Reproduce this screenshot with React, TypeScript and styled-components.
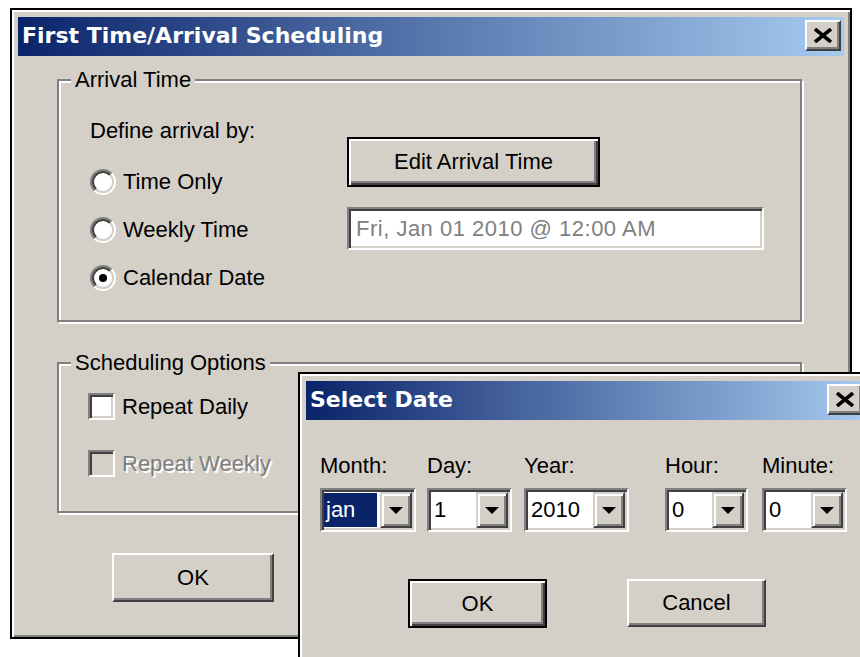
import React from "react";
import styled, { createGlobalStyle, css } from "styled-components";

const FACE = "#d4d0c8";
const SHADOW = "#808080";
const DARK = "#404040";
const LIGHT = "#ffffff";
const SELECT = "#0a246a";

const GlobalStyle = createGlobalStyle`
  html, body { margin: 0; padding: 0; background: #ffffff; }
  body { font-family: "Liberation Sans", Arial, sans-serif; }
`;

const raised = css`
  border: 2px solid;
  border-color: ${LIGHT} ${DARK} ${DARK} ${LIGHT};
  box-shadow: inset -2px -2px ${SHADOW};
`;

const defaultRaised = css`
  border: 2px solid #000;
  box-shadow: inset 2px 2px ${LIGHT}, inset -2px -2px ${DARK},
    inset -4px -4px ${SHADOW};
`;

const sunken = css`
  border: 2px solid;
  border-color: ${SHADOW} ${LIGHT} ${LIGHT} ${SHADOW};
  box-shadow: inset 2px 2px ${DARK}, inset -2px -2px ${FACE};
`;

const Desktop = styled.div`
  position: relative;
  width: 860px;
  height: 657px;
  overflow: hidden;
  background: #ffffff;
  font-family: "Liberation Sans", Arial, sans-serif;
  font-size: 22px;
  color: #000;
`;

const Window = styled.section<{ $x: number; $y: number; $w: number; $h: number }>`
  position: absolute;
  left: ${(p) => p.$x}px;
  top: ${(p) => p.$y}px;
  width: ${(p) => p.$w}px;
  height: ${(p) => p.$h}px;
  box-sizing: border-box;
  display: flex;
  flex-direction: column;
  padding: 7px 6px 6px;
  background: ${FACE};
  border: 2px solid #000;
  box-shadow: inset 2px 2px ${LIGHT}, inset -2px -2px ${SHADOW};
`;

const TitleBar = styled.header`
  flex: none;
  height: 39px;
  display: flex;
  align-items: center;
  justify-content: space-between;
  padding: 0 3px 0 4px;
  background: linear-gradient(to right, #0a246a, #a6caf0);
  overflow: hidden;
`;

const TitleText = styled.h1`
  margin: 0;
  padding-bottom: 2px;
  font: bold 22px/37px "DejaVu Sans", Verdana, sans-serif;
  color: #ffffff;
  white-space: nowrap;
`;

const CloseButton = styled.button`
  flex: none;
  width: 36px;
  height: 31px;
  margin-bottom: 2px;
  padding: 0;
  box-sizing: border-box;
  display: flex;
  align-items: center;
  justify-content: center;
  background: ${FACE};
  ${raised}
`;

const MainBody = styled.div`
  display: flex;
  flex-direction: column;
  align-items: flex-start;
  padding: 11px 0 0 39px;
`;

const GroupBox = styled.fieldset<{ $gapTop?: number }>`
  margin: ${(p) => p.$gapTop ?? 0}px 0 0;
  padding: 0;
  min-inline-size: 0;
  width: 745px;
  box-sizing: border-box;
  border: 2px solid ${SHADOW};
  box-shadow: inset 2px 2px ${LIGHT}, 2px 2px ${LIGHT};
`;

const GroupLegend = styled.legend`
  margin-left: 12px;
  padding: 0 4px;
  background: ${FACE};
  line-height: 26px;
`;

const ArrivalGrid = styled.div`
  display: grid;
  grid-template-columns: 257px 417px;
  padding: 25px 0 29px 31px;
`;

const ChoiceColumn = styled.div`
  display: flex;
  flex-direction: column;
`;

const Caption = styled.div`
  line-height: 26px;
  margin-bottom: 25px;
`;

const RadioList = styled.div`
  display: flex;
  flex-direction: column;
  gap: 22px;
`;

const OptionRow = styled.label<{ $disabled?: boolean }>`
  display: flex;
  align-items: center;
  gap: 7px;
  line-height: 26px;
  white-space: nowrap;
  color: ${(p) => (p.$disabled ? SHADOW : "#000")};
  text-shadow: ${(p) => (p.$disabled ? `2px 2px 0 ${LIGHT}` : "none")};
`;

const RadioOuter = styled.span`
  flex: none;
  width: 26px;
  height: 26px;
  box-sizing: border-box;
  border-radius: 50%;
  border: 2px solid;
  border-color: ${SHADOW} ${LIGHT} ${LIGHT} ${SHADOW};
  display: flex;
  align-items: center;
  justify-content: center;
`;

const RadioInner = styled.span<{ $checked?: boolean }>`
  width: 22px;
  height: 22px;
  box-sizing: border-box;
  border-radius: 50%;
  border: 2px solid;
  border-color: ${DARK} ${FACE} ${FACE} ${DARK};
  background: ${LIGHT};
  display: flex;
  align-items: center;
  justify-content: center;

  &::after {
    content: "";
    display: ${(p) => (p.$checked ? "block" : "none")};
    width: 8px;
    height: 8px;
    border-radius: 50%;
    background: #000;
  }
`;

const ActionColumn = styled.div`
  display: flex;
  flex-direction: column;
  align-items: flex-start;
  gap: 20px;
  padding-top: 19px;
`;

const PushButton = styled.button<{ $w: number; $h: number; $default?: boolean }>`
  width: ${(p) => p.$w}px;
  height: ${(p) => p.$h}px;
  box-sizing: border-box;
  padding: 0;
  background: ${FACE};
  font-family: "Liberation Sans", Arial, sans-serif;
  font-size: 22px;
  color: #000;
  ${(p) => (p.$default ? defaultRaised : raised)}
`;

const ReadOnlyField = styled.div`
  width: 417px;
  height: 43px;
  box-sizing: border-box;
  padding: 0 7px;
  background: ${LIGHT};
  color: ${SHADOW};
  line-height: 39px;
  letter-spacing: 0.5px;
  white-space: nowrap;
  ${sunken}
`;

const OptionsList = styled.div`
  display: flex;
  flex-direction: column;
  gap: 30px;
  padding: 17px 0 34px 29px;
`;

const CheckBox = styled.span<{ $disabled?: boolean }>`
  flex: none;
  width: 27px;
  height: 27px;
  box-sizing: border-box;
  background: ${(p) => (p.$disabled ? FACE : LIGHT)};
  ${sunken}
`;

const MainFooter = styled.div`
  display: flex;
  gap: 60px;
  margin: 40px 0 0 55px;
`;

const PickerBody = styled.div`
  display: flex;
  flex-direction: column;
  align-items: flex-start;
  padding: 33px 0 0 14px;
`;

const FieldRow = styled.div`
  display: flex;
  align-items: flex-start;
`;

const FieldColumn = styled.div<{ $w: number; $offset: number }>`
  width: ${(p) => p.$w}px;
  margin-left: ${(p) => p.$offset}px;
  display: flex;
  flex-direction: column;
  gap: 9px;
`;

const FieldLabel = styled.span`
  line-height: 26px;
  white-space: nowrap;
`;

const Combo = styled.div`
  height: 44px;
  box-sizing: border-box;
  display: flex;
  padding: 2px;
  background: ${LIGHT};
  ${sunken}
`;

const ComboValue = styled.span<{ $selected?: boolean }>`
  flex: 1;
  min-width: 0;
  margin: ${(p) => (p.$selected ? "1px 3px 1px 0" : "0")};
  padding-left: ${(p) => (p.$selected ? "2px" : "3px")};
  background: ${(p) => (p.$selected ? SELECT : "transparent")};
  color: ${(p) => (p.$selected ? LIGHT : "#000")};
  line-height: ${(p) => (p.$selected ? "34px" : "36px")};
  white-space: nowrap;
  overflow: hidden;
`;

const DropButton = styled.span`
  flex: none;
  width: 32px;
  box-sizing: border-box;
  display: flex;
  align-items: center;
  justify-content: center;
  background: ${FACE};
  border: 2px solid;
  border-color: ${FACE} ${DARK} ${DARK} ${FACE};
  box-shadow: inset 2px 2px ${LIGHT}, inset -2px -2px ${SHADOW};

  &::after {
    content: "";
    border-left: 7px solid transparent;
    border-right: 7px solid transparent;
    border-top: 7px solid #000;
  }
`;

const PickerFooter = styled.div`
  display: flex;
  gap: 80px;
  margin: 47px 0 0 88px;
`;

function CloseGlyph() {
  return (
    <svg width="20" height="15" viewBox="0 0 20 15" aria-hidden="true">
      <path d="M2 1 L18 14 M18 1 L2 14" stroke="#000" strokeWidth="3.6" fill="none" />
    </svg>
  );
}

function Radio({ label, checked }: { label: string; checked?: boolean }) {
  return (
    <OptionRow>
      <RadioOuter>
        <RadioInner $checked={checked} />
      </RadioOuter>
      {label}
    </OptionRow>
  );
}

function Check({ label, disabled }: { label: string; disabled?: boolean }) {
  return (
    <OptionRow $disabled={disabled}>
      <CheckBox $disabled={disabled} />
      {label}
    </OptionRow>
  );
}

type FieldSpec = { label: string; value: string; width: number; offset: number; selected?: boolean };

const dateFields: FieldSpec[] = [
  { label: "Month:", value: "jan", width: 96, offset: 0, selected: true },
  { label: "Day:", value: "1", width: 85, offset: 11 },
  { label: "Year:", value: "2010", width: 105, offset: 12 },
  { label: "Hour:", value: "0", width: 83, offset: 36 },
  { label: "Minute:", value: "0", width: 85, offset: 14 },
];

export default function App() {
  return (
    <Desktop>
      <GlobalStyle />

      <Window $x={10} $y={8} $w={842} $h={631}>
        <TitleBar>
          <TitleText>First Time/Arrival Scheduling</TitleText>
          <CloseButton aria-label="Close">
            <CloseGlyph />
          </CloseButton>
        </TitleBar>
        <MainBody>
          <GroupBox>
            <GroupLegend>Arrival Time</GroupLegend>
            <ArrivalGrid>
              <ChoiceColumn>
                <Caption>Define arrival by:</Caption>
                <RadioList>
                  <Radio label="Time Only" />
                  <Radio label="Weekly Time" />
                  <Radio label="Calendar Date" checked />
                </RadioList>
              </ChoiceColumn>
              <ActionColumn>
                <PushButton $w={253} $h={50} $default>
                  Edit Arrival Time
                </PushButton>
                <ReadOnlyField>Fri, Jan 01 2010 @ 12:00 AM</ReadOnlyField>
              </ActionColumn>
            </ArrivalGrid>
          </GroupBox>

          <GroupBox $gapTop={28}>
            <GroupLegend>Scheduling Options</GroupLegend>
            <OptionsList>
              <Check label="Repeat Daily" />
              <Check label="Repeat Weekly" disabled />
            </OptionsList>
          </GroupBox>

          <MainFooter>
            <PushButton $w={162} $h={49}>OK</PushButton>
            <PushButton $w={162} $h={49}>Cancel</PushButton>
          </MainFooter>
        </MainBody>
      </Window>

      <Window $x={298} $y={372} $w={576} $h={300}>
        <TitleBar>
          <TitleText>Select Date</TitleText>
          <CloseButton aria-label="Close">
            <CloseGlyph />
          </CloseButton>
        </TitleBar>
        <PickerBody>
          <FieldRow>
            {dateFields.map((f) => (
              <FieldColumn key={f.label} $w={f.width} $offset={f.offset}>
                <FieldLabel>{f.label}</FieldLabel>
                <Combo>
                  <ComboValue $selected={f.selected}>{f.value}</ComboValue>
                  <DropButton />
                </Combo>
              </FieldColumn>
            ))}
          </FieldRow>
          <PickerFooter>
            <PushButton $w={139} $h={49} $default>OK</PushButton>
            <PushButton $w={139} $h={48}>Cancel</PushButton>
          </PickerFooter>
        </PickerBody>
      </Window>
    </Desktop>
  );
}
